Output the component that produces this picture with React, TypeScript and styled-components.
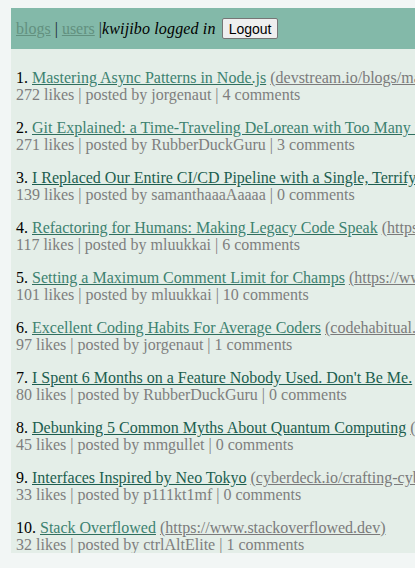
import React from "react";
import styled, { createGlobalStyle } from "styled-components";

const Global = createGlobalStyle`
  html, body {
    margin: 0;
    padding: 0;
    background: #f2f6f5;
  }
  body {
    padding: 8px 0 0 11px;
    font-family: "Liberation Serif", "Times New Roman", serif;
    font-size: 16px;
  }
`;

const Page = styled.div`
  width: max-content;
`;

const Header = styled.div`
  background: #83b9a9;
  padding: 10px 5px;
  height: 21px;
  display: flex;
  align-items: center;
  white-space: pre;
  color: #1d2b28;
`;

const NavLink = styled.a`
  color: #62907f;
  text-decoration: underline;
`;

const UserText = styled.em`
  color: #000;
  letter-spacing: 0.15px;
`;

const LogoutButton = styled.button`
  font-family: "Liberation Sans", Arial, sans-serif;
  font-size: 14px;
  padding: 1px 6px;
  height: 21px;
  border: 1px solid #767676;
  border-radius: 2px;
  background: #efefef;
  color: #000;
  margin-left: 6px;
`;

const Content = styled.div`
  background: #e4eee8;
  padding: 4px 5px 0 5px;
  line-height: 17px;
`;

const Item = styled.div`
  margin-top: 16px;
  white-space: nowrap;
`;

const TitleLine = styled.div`
  color: #000;
`;

const TitleLink = styled.a<{ $visited?: boolean }>`
  color: ${(p) => (p.$visited ? "#1c5e4f" : "#3d8270")};
  text-decoration: underline;
  text-decoration-color: ${(p) => (p.$visited ? "#1c5e4f" : "#2f6f5e")};
`;

const UrlLink = styled.a`
  color: #7b7b7b;
  text-decoration: underline;
`;

const Meta = styled.div`
  color: #7e7e7e;
`;

type Blog = {
  title: string;
  url: string;
  likes: number;
  author: string;
  comments: number;
  visited?: boolean;
};

const blogs: Blog[] = [
  { title: "Mastering Async Patterns in Node.js", url: "devstream.io/blogs/mastering-async-patterns", likes: 272, author: "jorgenaut", comments: 4 },
  { title: "Git Explained: a Time-Traveling DeLorean with Too Many Buttons", url: "gitgud.dev/delorean", likes: 271, author: "RubberDuckGuru", comments: 3 },
  { title: "I Replaced Our Entire CI/CD Pipeline with a Single, Terrifying Bash Script", url: "https://bashhorror.io", likes: 139, author: "samanthaaaAaaaa", comments: 0, visited: true },
  { title: "Refactoring for Humans: Making Legacy Code Speak", url: "https://cleancode.blog/refactoring-for-humans", likes: 117, author: "mluukkai", comments: 6 },
  { title: "Setting a Maximum Comment Limit for Champs", url: "https://www.champs.dev/comment-limit", likes: 101, author: "mluukkai", comments: 10 },
  { title: "Excellent Coding Habits For Average Coders", url: "codehabitual.dev/habits", likes: 97, author: "jorgenaut", comments: 1 },
  { title: "I Spent 6 Months on a Feature Nobody Used. Don't Be Me.", url: "https://shipless.dev/6-months", likes: 80, author: "RubberDuckGuru", comments: 0, visited: true },
  { title: "Debunking 5 Common Myths About Quantum Computing", url: "quantumbits.io/myths", likes: 45, author: "mmgullet", comments: 0, visited: true },
  { title: "Interfaces Inspired by Neo Tokyo", url: "cyberdeck.io/crafting-cyberpunk-interfaces", likes: 33, author: "p111kt1mf", comments: 0, visited: true },
  { title: "Stack Overflowed", url: "https://www.stackoverflowed.dev", likes: 32, author: "ctrlAltElite", comments: 1 },
];

export default function App() {
  return (
    <>
      <Global />
      <Page>
        <Header>
          <NavLink href="#">blogs</NavLink>
          {" | "}
          <NavLink href="#">users</NavLink>
          {" |"}
          <UserText>kwijibo logged in</UserText>
          <LogoutButton>Logout</LogoutButton>
        </Header>
        <Content>
          {blogs.map((b, i) => (
            <Item key={i}>
              <TitleLine>
                {i + 1}.{" "}
                <TitleLink href="#" $visited={b.visited}>
                  {b.title}
                </TitleLink>{" "}
                <UrlLink href="#">({b.url})</UrlLink>
              </TitleLine>
              <Meta>
                {b.likes} likes | posted by {b.author} | {b.comments} comments
              </Meta>
            </Item>
          ))}
        </Content>
      </Page>
    </>
  );
}
